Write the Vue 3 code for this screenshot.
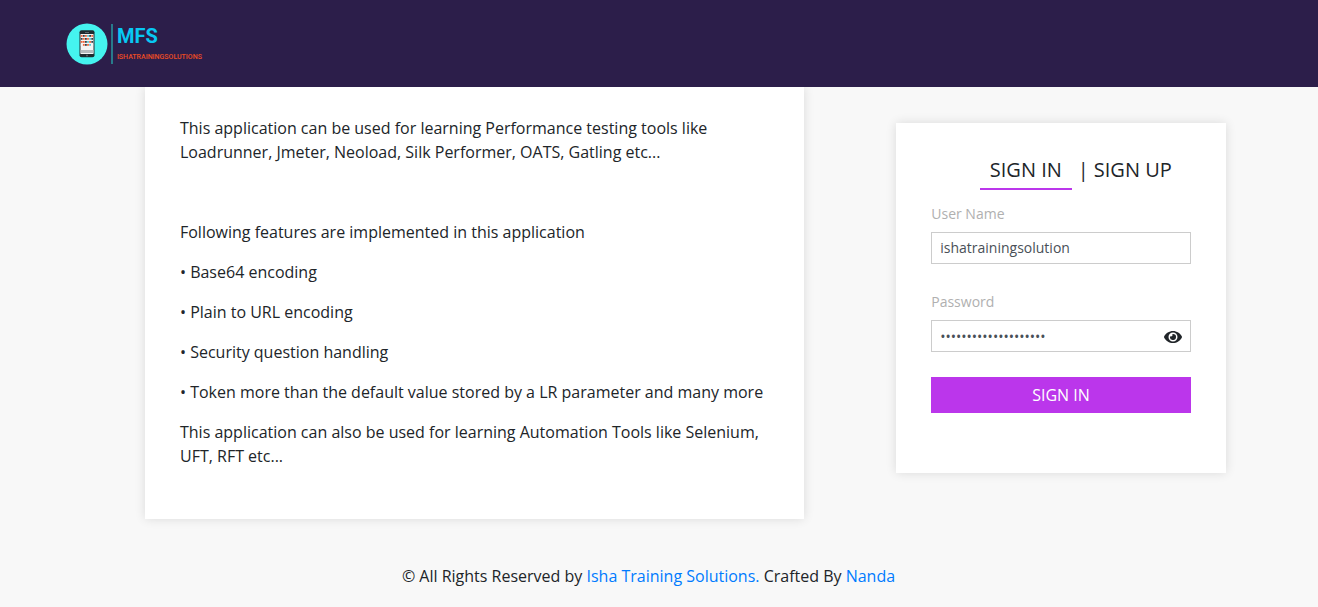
<script setup>
import { ref } from 'vue'

const username = ref('ishatrainingsolution')
const password = ref('ishatrainingsolution')
const visible = ref(false)
const features = [
  'Base64 encoding',
  'Plain to URL encoding',
  'Security question handling',
  'Token more than the default value stored by a LR parameter and many more',
]
const palette = { r: '#f0643c', d: '#33434a', b: '#58c9d4', w: '#f4f4f4' }
const dots = 'rdrbdrdrdrbdrrdbrdwrdrbw'.split('').map((k) => palette[k])
</script>

<template>
  <div class="page">
    <header class="bar">
      <a class="brand" href="#" aria-label="MFS">
        <svg class="mark" viewBox="0 0 42 42" aria-hidden="true">
          <circle cx="21" cy="21" r="20.5" fill="#45f3ef" />
          <rect x="13.5" y="7.2" width="15" height="27" rx="2" fill="#202b30" />
          <rect x="19" y="9" width="4" height="1" fill="#59666b" />
          <rect x="14.5" y="11" width="13" height="20" fill="#f4f4f4" />
          <rect
            v-for="(c, i) in dots"
            :key="i"
            :x="14.8 + (i % 6) * 2.1"
            :y="12 + Math.floor(i / 6) * 3"
            width="1.8"
            height="1.8"
            :fill="c"
          />
          <rect x="14.5" y="27" width="13" height="3" fill="#b6babd" />
          <circle cx="21" cy="32.6" r="1" fill="#59666b" />
        </svg>
        <span class="words">
          <span class="name">MFS</span>
          <span class="owner">ISHATRAININGSOLUTIONS</span>
        </span>
      </a>
    </header>

    <main class="content">
      <section class="card about">
        <p>
          This application can be used for learning Performance testing tools like
          Loadrunner, Jmeter, Neoload, Silk Performer, OATS, Gatling etc...
        </p>
        <p class="intro">Following features are implemented in this application</p>
        <p v-for="f in features" :key="f">• {{ f }}</p>
        <p>
          This application can also be used for learning Automation Tools like Selenium,
          UFT, RFT etc...
        </p>
      </section>

      <form class="card login" @submit.prevent>
        <nav class="tabs">
          <a class="tab active" href="#">SIGN IN</a>
          <span class="rule">|</span>
          <a class="tab" href="#">SIGN UP</a>
        </nav>
        <label for="user">User Name</label>
        <input id="user" v-model="username" class="field" type="text" />
        <label for="pass">Password</label>
        <div class="field secret">
          <input id="pass" v-model="password" :type="visible ? 'text' : 'password'" />
          <button class="eye" type="button" aria-label="Show password" @click="visible = !visible">
            <svg viewBox="0 0 576 512" aria-hidden="true">
              <path
                fill="currentColor"
                d="M572.52 241.4C518.29 135.59 410.93 64 288 64S57.68 135.64 3.48 241.41a32.35 32.35 0 0 0 0 29.19C57.71 376.41 165.07 448 288 448s230.32-71.64 284.52-177.41a32.35 32.35 0 0 0 0-29.19zM288 400a144 144 0 1 1 144-144 143.93 143.93 0 0 1-144 144zm0-240a95.31 95.31 0 0 0-25.31 3.79 47.85 47.85 0 0 1-66.9 66.9A95.78 95.78 0 1 0 288 160z"
              />
            </svg>
          </button>
        </div>
        <button class="submit" type="submit">SIGN IN</button>
      </form>
    </main>

    <footer class="foot">
      © All Rights Reserved by <a href="#">Isha Training Solutions.</a> Crafted By
      <a href="#">Nanda</a>
    </footer>
  </div>
</template>

<style>
body {
  margin: 0;
  background: #f8f8f8;
}
</style>

<style scoped>
.page {
  font: 16px/24px "Open Sans", sans-serif;
  color: #212529;
}
.page * {
  box-sizing: border-box;
}
.bar {
  position: relative;
  z-index: 1;
  display: flex;
  align-items: center;
  height: 87px;
  padding-left: 5%;
  background: #2c1e4a;
}
.brand {
  display: flex;
  align-items: center;
  gap: 3px;
  text-decoration: none;
}
.mark {
  width: 42px;
  height: 42px;
}
.words {
  display: flex;
  flex-direction: column;
  height: 40px;
  padding-left: 4px;
  border-left: 2px solid #287b8b;
  font-family: Roboto, sans-serif;
}
.name {
  font-size: 20px;
  font-weight: 700;
  line-height: 24px;
  color: #08c8f3;
}
.owner {
  font-size: 7px;
  font-weight: 500;
  line-height: 18px;
  color: #ee4c24;
}
.content {
  display: grid;
  grid-template-columns: 50vw 25vw;
  justify-content: space-between;
  align-items: start;
  padding: 0 7% 0 11%;
}
.card {
  background: #fff;
  box-shadow: 0 0 10px rgba(0, 0, 0, 0.12);
}
.about {
  padding: 29px 35px 35px;
}
.about p {
  margin: 0 0 16px;
}
.about .intro {
  margin-top: 56px;
}
.login {
  display: flex;
  flex-direction: column;
  margin-top: 36px;
  padding: 30px 35px 60px;
}
.tabs {
  display: flex;
  justify-content: flex-end;
  padding-right: 19px;
  margin-bottom: 12px;
  font-size: 20px;
  line-height: 33px;
}
.tab {
  padding-bottom: 2px;
  color: inherit;
  text-decoration: none;
  border-bottom: 2px solid transparent;
}
.active {
  padding: 0 10px 2px;
  border-color: #bb36eb;
}
.rule {
  padding: 0 5px 0 6px;
}
label {
  margin-bottom: 6px;
  font-size: 14px;
  line-height: 24px;
  color: #b0b0b0;
}
.field {
  width: 100%;
  height: 32px;
  margin-bottom: 26px;
  padding: 0 8px 2px;
  border: 1px solid #ccc;
  border-radius: 0;
  background: #fff;
  font: 14px "Open Sans", sans-serif;
  color: #495057;
}
.secret {
  display: flex;
  align-items: center;
  margin-bottom: 25px;
  padding-bottom: 0;
}
.secret input {
  flex: 1;
  min-width: 0;
  padding: 0;
  border: 0;
  outline: 0;
  background: transparent;
  font: inherit;
  color: inherit;
}
.eye {
  display: flex;
  padding: 2px 0 0;
  border: 0;
  background: none;
  color: #212529;
}
.eye svg {
  width: 18px;
  height: 16px;
}
.submit {
  height: 36px;
  padding: 0;
  border: 0;
  background: #bb36eb;
  font: 16px/24px "Open Sans", sans-serif;
  color: #fff;
}
.foot {
  padding: 45px 21px 19px 0;
  text-align: center;
}
.foot a {
  color: #007bff;
  text-decoration: none;
}
</style>
